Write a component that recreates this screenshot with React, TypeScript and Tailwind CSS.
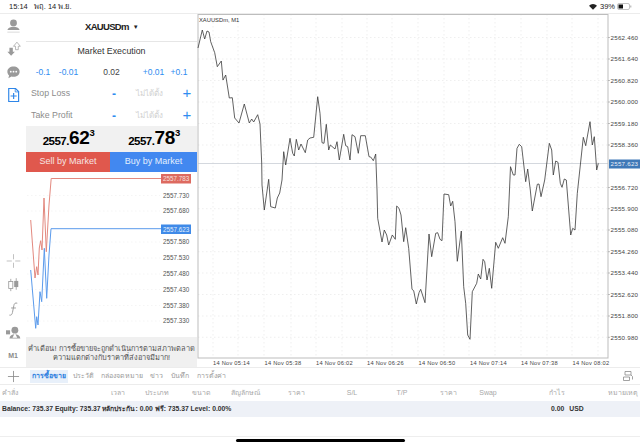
const FONT = "'Liberation Sans','Noto Sans',Arial,sans-serif";

const mainLine = "198,48 202.3,30 204.7,39 207,31 209,32 210.7,41.7 214.7,52.7 217.3,66.7 221.3,61 223,80 225.7,75 229.3,98 232.3,97.7 234.7,118 239,123 244.3,104 249.3,123 251.7,119 253.7,122 257.7,114.7 260,124 261.7,163 262,185 264.3,210 268.7,179.3 270.7,206.7 275.3,208 277.3,198 279.7,193 282,180 283.7,151.7 285.7,165 290,138.3 292.7,153.3 294.3,156 296.3,139.3 298.7,150 301,144 305.3,152.7 307.7,140 310,138 313.7,137.3 317.7,96.7 320,113.3 322,142.7 324,143.3 326.3,124.3 328.7,150 330.3,145 335,149 337,141.7 339.3,160 343.7,134.3 345.7,145.7 347.7,146.7 350,160 352,134.7 355,136.7 358.3,153.3 360.7,135.7 365.3,135.7 369,156.7 370.7,157 373.3,160.7 375.7,154 377,190 377.7,218.3 382,242 384.3,230 386.7,235 388.7,245 392.3,235 395.3,239.3 396.7,206 399,208.3 401,215 403.7,241.7 405.7,227.7 408.7,248.3 412,289.3 413.7,290.7 416.3,304 419,292.7 420.7,289.3 425,302.7 429,234 431.7,256.7 435.7,233.3 437.7,232.7 440,239.3 442,240.7 444,194 448.7,194.7 450.7,206 452.7,201.3 455,221.7 457.3,261.3 461.3,231 463.7,286.7 465.7,303.3 467.7,335 470,339.3 472.3,291.7 476.7,283.3 478.3,274 480.7,279 483,259.3 484.7,261.7 487,280 489.3,268.3 491.7,288.3 495.7,242.3 498.3,248.3 502.7,237.7 505,243.3 508.3,216.7 510.5,166.7 513.3,175 515,175 517,148.3 519.3,144.3 521.7,146.7 525.7,181.7 527.7,169 530.3,190 532.3,211 537.3,184.3 539,184 541,196.7 544.7,180 549.3,143.3 551.7,150 553.3,175 555.7,161 558,162.3 560.3,183.3 562,187.3 564.3,179 566.3,180 570.7,235 572.7,228.3 575,230 577.3,193.3 583.3,137.3 585.7,145.7 590,121.7 592.3,145 594.3,136.7 596.7,170 598.3,163.3";

const priceLabels: [string, number][] = [
  ["2562.460", 37.5], ["2561.640", 59], ["2560.820", 80.5], ["2560.000", 102], ["2559.180", 123.5], ["2558.360", 145],
  ["2556.720", 187.5], ["2555.900", 208.7], ["2555.080", 230], ["2554.260", 251.7], ["2553.440", 273], ["2552.620", 294.5], ["2551.800", 316], ["2550.980", 337.3],
];
const vGrid = [213, 238, 264, 291, 316, 342, 367, 392, 418, 444, 469, 495, 521, 547, 572, 598];
const timeLabels: [string, number][] = [
  ["14 Nov 05:14", 213], ["14 Nov 05:38", 264.5], ["14 Nov 06:02", 316], ["14 Nov 06:26", 367], ["14 Nov 06:50", 418.5], ["14 Nov 07:14", 470], ["14 Nov 07:38", 521], ["14 Nov 08:02", 572.5],
];

function MainChart() {
  return (
    <svg viewBox="197 14 443 353" className="w-[443px] h-[353px] block" style={{ fontFamily: FONT }}>
      {priceLabels.map(([, y]) => (
        <line key={y} x1={198} x2={608} y1={y} y2={y} stroke="#e8e8e8" strokeWidth={0.7} strokeDasharray="1.5 2.5" />
      ))}
      {vGrid.map((x) => (
        <line key={x} x1={x} x2={x} y1={14} y2={358} stroke="#e8e8e8" strokeWidth={0.7} strokeDasharray="1.5 2.5" />
      ))}
      <line x1={198} x2={608} y1={163.5} y2={163.5} stroke="#c9ced6" strokeWidth={0.8} />
      <rect x={198} y={14.5} width={410} height={343.5} fill="none" stroke="#bdbdbd" strokeWidth={1} />
      <polyline points={mainLine} fill="none" stroke="#3a3a3a" strokeWidth={0.8} strokeLinejoin="round" />
      <text x={199} y={21.5} fontSize={5.8} fill="#333">XAUUSDm, M1</text>
      {priceLabels.map(([t, y]) => (
        <g key={t}>
          <line x1={608} x2={610} y1={y} y2={y} stroke="#999" strokeWidth={0.6} />
          <text x={610.5} y={y + 2.2} fontSize={6.2} fill="#444" letterSpacing={0.25}>{t}</text>
        </g>
      ))}
      <rect x={609} y={159.5} width={31} height={9} fill="#3f79b8" />
      <text x={610.5} y={166.2} fontSize={6.2} fill="#e8eef7" letterSpacing={0.25}>2557.623</text>
      {timeLabels.map(([t, x]) => (
        <text key={t} x={x} y={364.5} fontSize={5.7} fill="#444" letterSpacing={0.25}>{t}</text>
      ))}
    </svg>
  );
}

function MiniChart() {
  const ys = [195.5, 211, 242, 258, 274, 289.5, 305.5, 321];
  const labels = ["2557.730", "2557.680", "2557.580", "2557.530", "2557.480", "2557.430", "2557.380", "2557.330"];
  return (
    <svg viewBox="26 172 171 165" className="w-[171px] h-[165px] block" style={{ fontFamily: FONT }}>
      {ys.map((y) => (
        <line key={y} x1={27} x2={160} y1={y} y2={y} stroke="#f0f0f0" strokeWidth={0.7} strokeDasharray="1.5 2.5" />
      ))}
      <polyline points="30.7,220 35,278 36.7,266.7 38,275 39.3,248 40.7,240.7 42,250 44,198 46.3,251.7 49,205 51.2,178.5 161,178.5" fill="none" stroke="#e3897f" strokeWidth={1} />
      <polyline points="30.7,270 35.7,328.3 36.7,316.7 38,325 40,291.7 41.7,301.7 44.3,248.3 46.7,298.3 49,255 51,228.7 161,228.7" fill="none" stroke="#5b9bec" strokeWidth={1} />
      <rect x={161} y={174} width={30} height={9.5} fill="#dd6a60" />
      <text x={163} y={181} fontSize={6.3} fill="#f8e0de">2557.783</text>
      <rect x={161} y={224.5} width={30} height={9.5} fill="#3f8ae8" />
      <text x={163} y={231.5} fontSize={6.3} fill="#e2eefc">2557.623</text>
      {ys.map((y, i) => (
        <text key={y} x={163} y={y + 2.2} fontSize={6.3} fill="#555">{labels[i]}</text>
      ))}
    </svg>
  );
}

function SideIcons() {
  const g = "#9a9a9a";
  const ic = "w-[15px] h-[22px]";
  return (
    <div className="w-[26px] h-full flex flex-col items-center bg-white">
      <svg viewBox="0 0 22 22" className={ic + " mt-[1px] mb-[1px]"}>
        <circle cx="11" cy="6.5" r="5" fill={g} />
        <path d="M2 17c1-4 5-5 9-5s8 1 9 5z" fill={g} />
        <line x1="2" y1="20" x2="20" y2="20" stroke="#c8c8c8" strokeWidth="1" />
      </svg>
      <svg viewBox="0 0 22 22" className={ic}>
        <path d="M4 10h5v6h3l-5.500 6L1 16h3z" transform="translate(1 -1)" fill={g} />
        <path d="M14 12V7h-3l5-6 5 6h-3v5z" fill="none" stroke={g} strokeWidth="1" />
      </svg>
      <svg viewBox="0 0 22 22" className={ic + " mt-[1px]"}>
        <path d="M11 3c5 0 9 3 9 7.500S16 18 11 18c-1 0-2 0-3-.4L3.500 20l1-4C3 14.500 2 12.700 2 10.500 2 6 6 3 11 3z" fill={g} />
        <circle cx="7" cy="10.500" r="1.300" fill="#fff" />
        <circle cx="11" cy="10.500" r="1.300" fill="#fff" />
        <circle cx="15" cy="10.500" r="1.300" fill="#fff" />
      </svg>
      <svg viewBox="0 0 22 22" className={ic + " mt-[1px]"}>
        <path d="M4 1.500h10l4.500 4.500v14.500H4z" fill="none" stroke="#2f86e8" strokeWidth="1.700" />
        <path d="M13.500 1.500v5h5" fill="none" stroke="#2f86e8" strokeWidth="1.200" />
        <path d="M11.200 8v9M6.700 12.500h9" stroke="#2f86e8" strokeWidth="1.700" />
      </svg>
      <div className="flex-1" />
      <svg viewBox="0 0 22 22" className={ic}>
        <path d="M11 1v7.500M11 13.500V21M1 11h7.500M13.500 11H21" stroke="#b4b4b4" strokeWidth="1.200" />
      </svg>
      <svg viewBox="0 0 22 22" className={ic + " mt-[2px]"}>
        <path d="M7 2v18M15 1v17" stroke={g} strokeWidth="1.200" />
        <rect x="4" y="6" width="6" height="10" fill="#fff" stroke={g} strokeWidth="1.200" />
        <rect x="12" y="5" width="6" height="9" fill={g} />
      </svg>
      <svg viewBox="0 0 22 22" className={ic + " mt-[2px]"}>
        <path d="M16.500 2.500c-3-1-4.500.5-5 3.500L9.500 16c-.5 3-2 4.500-4.500 4M7.500 9.500h7" fill="none" stroke={g} strokeWidth="1.400" />
      </svg>
      <svg viewBox="0 0 22 22" className={ic + " mt-[2px] mb-[1px]"}>
        <circle cx="13" cy="7" r="5" fill={g} />
        <path d="M5 19c.5-4 4-6 8-6s7.500 2 8 6z" fill={g} />
        <rect x="0" y="7" width="6" height="6" fill={g} />
        <path d="M13 11l3.500 7h-7z" fill="#fff" />
      </svg>
      <div className="h-[22px] flex items-center text-[7px] font-bold text-[#8a8a8a]">M1</div>
    </div>
  );
}

function Row({ label }: { label: string }) {
  return (
    <div className="h-[22px] flex items-center text-[8.800px] text-[#8c8c8c] pt-[2px]">
      <span className="w-[81px] pl-[5px]">{label}</span>
      <span className="w-[14px] text-[#2f8cf0] font-bold text-[12px] text-center">-</span>
      <span className="flex-1 text-center text-[8px] text-[#d0d0d0] whitespace-nowrap">ไม่ได้ตั้ง</span>
      <span className="w-[20px] text-[#2f8cf0] text-[15px] leading-none text-center mt-[-3px]">+</span>
    </div>
  );
}

function Price({ a, b, c }: { a: string; b: string; c: string }) {
  return (
    <div className="flex-1 flex items-start justify-center text-black">
      <span className="text-[11.500px] font-bold mt-[7px] tracking-[-0.5px]">{a}</span>
      <span className="text-[19px] font-bold leading-[24px] tracking-[-0.3px]">{b}</span>
      <span className="text-[9.500px] font-bold">{c}</span>
    </div>
  );
}

function Lot({ t, c }: { t: string; c: string }) {
  return <span className={"flex justify-center whitespace-nowrap " + c}>{t}</span>;
}

function Panel() {
  return (
    <div className="w-[171px] h-full flex flex-col bg-white">
      <div className="h-[28px] flex items-center justify-center border-b border-[#e6e6e6] text-[9.500px] tracking-[-0.7px] font-bold text-[#222]">
        XAUUSDm <span className="ml-[4px] text-[6px]">▼</span>
      </div>
      <div className="h-[20px] flex items-center justify-center text-[8.800px] text-[#333] pb-[1px]">Market Execution</div>
      <div className="h-[20px] flex items-center text-[8.500px] text-[#2f8cf0]">
        <Lot t="-0.1" c="w-[34px]" />
        <Lot t="-0.01" c="w-[17px]" />
        <Lot t="0.02" c="flex-1 text-[#444]" />
        <Lot t="+0.01" c="w-[15px]" />
        <Lot t="+0.1" c="w-[36px]" />
      </div>
      <Row label="Stop Loss" />
      <Row label="Take Profit" />
      <div className="h-[26px] flex bg-[#f1f1f1]">
        <Price a="2557." b="62" c="3" />
        <Price a="2557." b="78" c="3" />
      </div>
      <div className="h-[20px] flex text-[9px] text-[#f6e4e2]">
        <div className="w-[84px] bg-[#e0584d] flex items-center justify-center">Sell by Market</div>
        <div className="flex-1 bg-[#4288f0] flex items-center justify-center text-[#e4effd]">Buy by Market</div>
      </div>
      <MiniChart />
      <div className="flex-1 bg-[#f0f0f0] flex flex-col items-center justify-center text-[7.400px] leading-[9px] text-[#555] whitespace-nowrap pt-[1px]">
        <div>คำเตือน! การซื้อขายจะถูกดำเนินการตามสภาพตลาด</div>
        <div>ความแตกต่างกับราคาที่ส่งอาจมีมาก!</div>
      </div>
    </div>
  );
}

const headers: [string, string][] = [
  ["คำสั่ง", "w-[98px] text-left pl-[2px]"],
  ["เวลา", "w-[40px] text-center"],
  ["ประเภท", "w-[38px] text-center"],
  ["ขนาด", "w-[50px] text-center"],
  ["สัญลักษณ์", "w-[38px] text-center"],
  ["ราคา", "w-[64px] text-center"],
  ["S/L", "w-[48px] text-center"],
  ["T/P", "w-[52px] text-center"],
  ["ราคา", "w-[40px] text-center"],
  ["Swap", "w-[40px] text-center"],
  ["กำไร", "w-[98px] text-center"],
  ["หมายเหตุ", "w-[34px] text-center"],
];

export default function App() {
  return (
    <div className="w-[640px] h-[447px] overflow-hidden bg-white flex flex-col" style={{ fontFamily: FONT }}>
      <div className="h-[14px] flex items-center text-[7.500px] text-[#222] bg-white pl-[9px] pr-[8px] border-b border-[#ececec]">
        <span>15:14</span>
        <span className="ml-[6px]">พฤ. 14 พ.ย.</span>
        <div className="flex-1" />
        <svg viewBox="0 0 10 8" className="w-[8px] h-[7px] mr-[3px]">
          <path d="M0 3a7 7 0 0 1 10 0L5 8z" fill="#222" />
        </svg>
        <span>39%</span>
        <svg viewBox="0 0 15 7" className="w-[15px] h-[7px] ml-[2px]">
          <rect x="0.500" y="0.500" width="12" height="6" rx="1.500" fill="none" stroke="#aaa" strokeWidth="0.700" />
          <rect x="1.500" y="1.500" width="4.500" height="4" fill="#111" />
          <rect x="13.300" y="2.500" width="1" height="2" fill="#aaa" />
        </svg>
      </div>
      <div className="h-[353px] flex">
        <SideIcons />
        <Panel />
        <MainChart />
      </div>
      <div className="h-[17px] flex items-center text-[7px] text-[#9a9a9a] border-t border-[#ececec] whitespace-nowrap">
        <span className="w-[30px] flex justify-center pr-[4px]">
          <svg viewBox="0 0 14 14" className="w-[13px] h-[13px]"><path d="M7 1v12M1 7h12" stroke="#8a8a8a" strokeWidth="0.900" /></svg>
        </span>
        <span className="w-[38px] h-[13px] flex items-center justify-center bg-[#e8f0fa] text-[#2f80e0] font-bold">การซื้อขาย</span>
        <span className="ml-[5px] w-[20px] flex justify-center">ประวัติ</span>
        <span className="ml-[8px] w-[41px] flex justify-center">กล่องจดหมาย</span>
        <span className="ml-[8px] w-[13px] flex justify-center">ข่าว</span>
        <span className="ml-[8px] w-[18px] flex justify-center">บันทึก</span>
        <span className="ml-[8px] w-[28px] flex justify-center">การตั้งค่า</span>
        <div className="flex-1" />
        <svg viewBox="0 0 12 12" className="w-[12px] h-[12px] mr-[6px]">
          <path d="M3 1.500h6v3.500H3zM1.500 7h6v3.500h-6zM9 5l1.500 1.500v3" fill="none" stroke="#8a8a8a" strokeWidth="0.800" />
        </svg>
      </div>
      <div className="h-[17px] flex items-center text-[7px] text-[#a8a8a8] border-t border-[#ececec]">
        {headers.map(([t, c], i) => (
          <span key={i} className={"whitespace-nowrap " + c}>{t}</span>
        ))}
      </div>
      <div className="h-[16px] flex items-center bg-[#eef1f7] text-[6.800px] font-bold text-[#333] whitespace-nowrap pt-[1px]">
        <span className="w-[551px] pl-[2px]">Balance: 735.37 Equity: 735.37 หลักประกัน: 0.00 ฟรี: 735.37 Level: 0.00%</span>
        <span>0.00</span>
        <span className="ml-[5px]">USD</span>
      </div>
      <div className="flex-1 flex flex-col items-center">
        <div className="h-[20px] w-full border-b border-[#eeeeee]" />
        <div className="w-[169px] h-[3px] rounded-full bg-black mt-[2px]" />
      </div>
    </div>
  );
}
